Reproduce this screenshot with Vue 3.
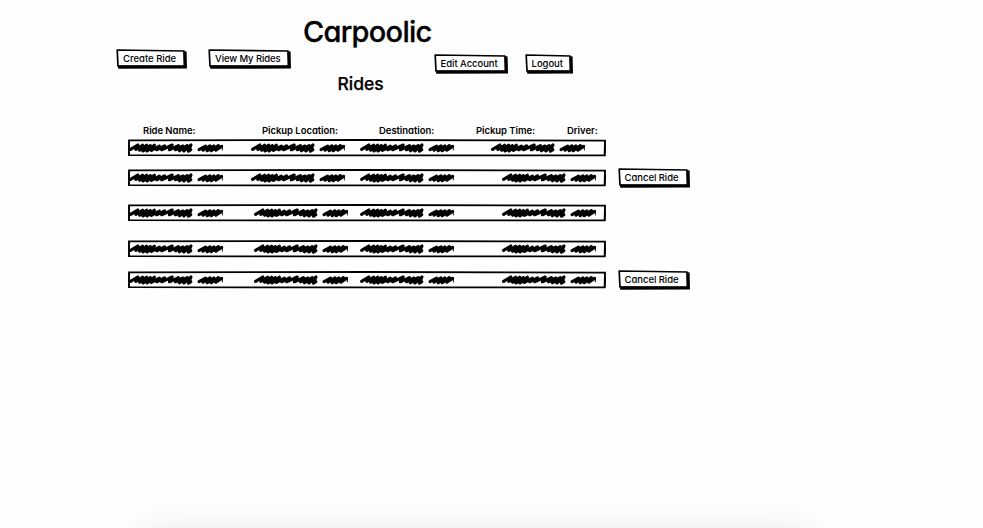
<script setup>
const actions = [
  { label: 'Create Ride', cls: 'create', w: 71 },
  { label: 'View My Rides', cls: 'view', w: 83 },
  { label: 'Edit Account', cls: 'edit', w: 74 },
  { label: 'Logout', cls: 'logout', w: 48 },
]
const columns = [
  { label: 'Ride Name:', cls: 'c-name' },
  { label: 'Pickup Location:', cls: 'c-pickup' },
  { label: 'Destination:', cls: 'c-dest' },
  { label: 'Pickup Time:', cls: 'c-time' },
  { label: 'Driver:', cls: 'c-driver' },
]
const rides = [
  { gap: 13, cells: [1, 123, 232, 363], cancel: false },
  { gap: 18, cells: [1, 123, 232, 374], cancel: true },
  { gap: 19, cells: [1, 126, 232, 374], cancel: false },
  { gap: 14, cells: [1, 126, 232, 374], cancel: false },
  { gap: 0, cells: [1, 126, 232, 374], cancel: true },
]
const frame = (w) => `M1.2 1 L${w - 3} 2 L${w - 2.6} 17 L2 17 Z`
const shade = (w) => `M${w - 3.4} 2 L${w - 0.4} 2.4 L${w} 19.6 L2.4 19.8 L1.6 16.6 L${w - 3} 16.8 Z`
</script>

<template>
  <main class="page">
    <h1><span class="title">Carpoolic</span></h1>
    <nav class="actions">
      <button v-for="a in actions" :key="a.label" class="btn" :class="a.cls">
        <svg class="frame" :width="a.w" height="20">
          <path :d="frame(a.w)" class="outline" />
          <path :d="shade(a.w)" />
        </svg>
        <span class="label">{{ a.label }}</span>
      </button>
    </nav>
    <h2><span class="subtitle">Rides</span></h2>

    <div class="columns">
      <span v-for="c in columns" :key="c.label" :class="c.cls">{{ c.label }}</span>
    </div>

    <section class="rides">
      <div v-for="(r, i) in rides" :key="i" class="ride" :style="{ marginBottom: r.gap + 'px' }">
        <svg class="row" width="479" height="18" viewBox="0 0 479 18">
          <path class="rowline" d="M1 1.4 L240 1 L477 1.6 L476.6 16.4 L240 16.4 L1 16.2 Z" />
          <path class="corner" d="M.9 16.8 L.9 8 L1.6 1 M476.4 1 L477.4 9 L476.8 17" />
          <g v-for="x in r.cells" :key="x" :transform="`translate(${x} 3)`" class="scribble">
            <path d="M1.6 7.4 L8.8 3 L6.8 7.4 L13.6 3.2 L10.6 8.2 L17.6 3.2 L14 9 L21.4 3.6 L18 9 L25.4 3.2 L22.4 8.4 L30.4 4.2 L27.6 7.8 L35.6 3.8 L32.6 7.8 L43.2 3 L40.4 7.8 L49.4 3.6 L46.4 7.8 L54 4 L50.4 8.8 L58.2 3.6 L54.8 9 L62 3 L59.4 9.2 L61.8 7.6" />
            <path d="M70 7.6 L76.6 4.2 L74 8.2 L81 3.8 L78.2 8.8 L84.8 4 L82.2 8.8 L89.4 3.6 L86.8 8.2 L92.6 4.4" />
            <path class="tip" d="M93.3 3.6 L93.4 8" />
          </g>
        </svg>
        <button v-if="r.cancel" class="btn cancel">
          <svg class="frame" width="72" height="20">
            <path :d="frame(72)" class="outline" />
            <path :d="shade(72)" />
          </svg>
          <span class="label">Cancel Ride</span>
        </button>
      </div>
    </section>
    <div class="next-panel"></div>
  </main>
</template>

<style>
body {
  background: #fefefe;
}
</style>

<style scoped>
.page {
  display: flex;
  flex-direction: column;
  box-sizing: border-box;
  height: 528px;
  overflow: hidden;
  color: #000;
  font-family: Inter, "Liberation Sans", sans-serif;
  font-feature-settings: "cv11";
}
h1,
h2 {
  margin: 0;
  white-space: nowrap;
}
h1 {
  flex: none;
  height: 35px;
  padding: 14px 0 0 303px;
  font-size: 29px;
  line-height: 35px;
  font-weight: 500;
  letter-spacing: -0.72px;
  -webkit-text-stroke: 0.3px #000;
}
h2 {
  flex: none;
  height: 22px;
  padding: 0 0 0 337.5px;
  margin-top: -1px;
  font-size: 17.5px;
  line-height: 22px;
  font-weight: 500;
  -webkit-text-stroke: 0.25px #000;
}
.actions {
  display: flex;
  flex: none;
  align-items: flex-start;
  height: 25px;
  padding-left: 116px;
}
.btn {
  display: grid;
  flex: none;
  height: 20px;
  padding: 0;
  border: 0;
  background: none;
  color: inherit;
  font: 500 9.5px/20px Inter, "Liberation Sans", sans-serif;
  font-feature-settings: "cv11";
  text-align: left;
}
.frame,
.label {
  grid-area: 1 / 1;
}
.frame {
  display: block;
  overflow: visible;
}
.outline {
  fill: #fff;
  stroke: #000;
  stroke-width: 1.7;
  stroke-linejoin: round;
}
.label {
  padding-left: 7px;
  white-space: nowrap;
}
.view {
  margin-left: 21px;
}
.view .label {
  letter-spacing: -0.1px;
}
.edit {
  margin: 5px 0 0 143px;
}
.edit .label,
.logout .label,
.cancel .label {
  padding-left: 6.6px;
  letter-spacing: -0.06px;
}
.logout {
  margin: 5px 0 0 17px;
}
.columns {
  display: grid;
  flex: none;
  grid-template-columns: 119px 117px 97px 91px 60px;
  height: 14px;
  padding: 29px 0 0 143px;
  font-size: 9.5px;
  line-height: 14px;
  font-weight: 600;
  letter-spacing: -0.05px;
  white-space: nowrap;
}
.rides {
  flex: none;
  padding: 1px 0 0 128px;
}
.ride {
  display: flex;
  align-items: flex-start;
  height: 17px;
}
.row {
  flex: none;
  display: block;
  overflow: visible;
}
.rowline,
.corner {
  fill: none;
  stroke: #000;
  stroke-width: 1.8;
}
.corner {
  stroke-width: 1.3;
}
.scribble {
  fill: none;
  stroke: #000;
  stroke-width: 3.1;
  stroke-linecap: round;
  stroke-linejoin: round;
}
.tip {
  stroke-width: 0.9;
}
.cancel {
  margin: -1px 0 0 11px;
}
.next-panel {
  flex: none;
  width: 666px;
  height: 60px;
  margin: auto 0 -64px 143px;
  box-shadow: 0 0 36px rgba(0, 0, 0, 0.1);
}
</style>
